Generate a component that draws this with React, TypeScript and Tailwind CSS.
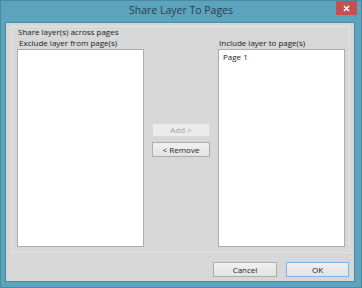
import React from "react";

export default function App() {
  return (
    <div
      className="relative flex flex-col w-[362px] h-[288px] bg-[#5ca3be] border border-[#4b8aa3]"
      style={{ fontFamily: '"Open Sans", "Noto Sans", sans-serif' }}
    >
      <div className="h-[21px] flex items-center justify-center text-[10.5px] text-[#2d3e46] pb-[1px]">
        Share Layer To Pages
      </div>
      <div className="absolute top-[0px] right-[4px] w-[21px] h-[14px] bg-[#c74f4f] flex items-center justify-center">
        <svg width="7" height="7" viewBox="0 0 7 7">
          <path d="M1 1 L6 6 M6 1 L1 6" stroke="#ffffff" strokeWidth="1.6" />
        </svg>
      </div>
      <div className="ml-[4px] mr-[6px] mb-[5px] flex-1 flex flex-col bg-[#d7d7d7] border border-[#4a8aa4] pt-[3px] pl-[6px] pr-[4px]">
        <div className="h-[227px] border border-[#e2e2e2] flex flex-col pl-[4px] pr-[4px]">
          <div className="text-[8px] leading-[10px] text-[#222] pl-[1px]">
            Share layer(s) across pages
          </div>
          <div className="flex mt-[1px]">
            <div className="flex flex-col w-[127px]">
              <div className="text-[8px] leading-[9px] text-[#222] pl-[2px]">
                Exclude layer from page(s)
              </div>
              <div className="mt-[2px] h-[198px] bg-white border border-[#abadb3] border-t-[#a9a9a9]" />
            </div>
            <div className="flex flex-col w-[58px] mx-[8px] pt-[85px] gap-[5px]">
              <div className="h-[14px] bg-[#ebebeb] border border-[#d9d9d9] flex items-center justify-center text-[8px] text-[#a3a3a3]">
                Add &gt;
              </div>
              <div className="h-[15px] bg-gradient-to-b from-[#f0f0f0] to-[#e3e3e3] border border-[#adadad] flex items-center justify-center text-[8px] text-[#222]">
                &lt; Remove
              </div>
            </div>
            <div className="flex flex-col w-[127px]">
              <div className="text-[8px] leading-[9px] text-[#222] pl-[1px]">
                Include layer to page(s)
              </div>
              <div className="mt-[2px] h-[198px] bg-white border border-[#abadb3] pl-[4px] pt-[2px]">
                <div className="text-[8px] leading-[10px] text-[#222]">Page 1</div>
              </div>
            </div>
          </div>
        </div>
        <div className="flex justify-end gap-[9px] mt-[9px] pr-[1px]">
          <div className="w-[64px] h-[15px] bg-gradient-to-b from-[#f0f0f0] to-[#e3e3e3] border border-[#adadad] flex items-center justify-center text-[8px] text-[#222]">
            Cancel
          </div>
          <div className="w-[63px] h-[15px] bg-gradient-to-b from-[#f0f0f0] to-[#e3e3e3] border border-[#7eb4ea] flex items-center justify-center text-[8px] text-[#222]">
            OK
          </div>
        </div>
      </div>
    </div>
  );
}
